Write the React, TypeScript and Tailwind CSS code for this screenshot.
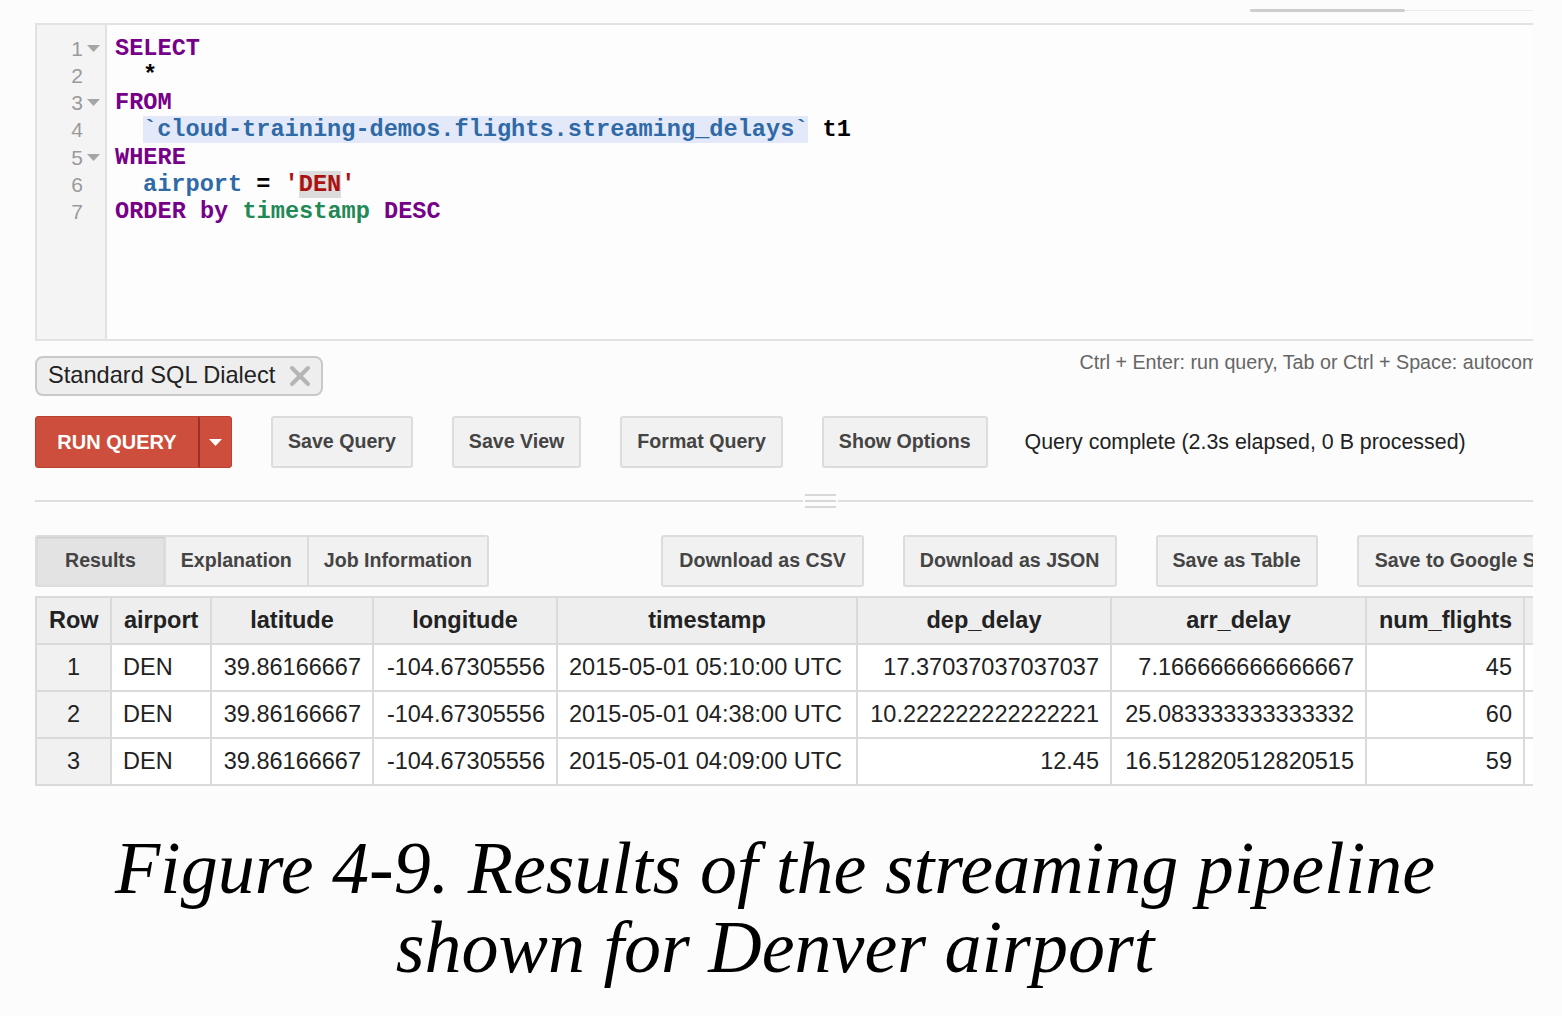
import React from "react";

const KW = "text-[#770088]";
const VAR = "text-[#2f6aa6]";

const codeLines: React.ReactNode[] = [
    <span className={KW}>SELECT</span>,
    <span className="pl-[28px] text-black">*</span>,
    <span className={KW}>FROM</span>,
    <span className="pl-[28px]">
        <span className={`${VAR} bg-[#e4e9fa]`}>`cloud-training-demos.flights.streaming_delays`</span>
        <span className="text-black"> t1</span>
    </span>,
    <span className={KW}>WHERE</span>,
    <span className="pl-[28px]">
        <span className={VAR}>airport</span>
        <span className="text-black"> = </span>
        <span className="text-[#aa1111]">
            '<span className="bg-[#dcdcdc]">DEN</span>'
        </span>
    </span>,
    <span>
        <span className={KW}>ORDER by </span>
        <span className="text-[#228855]">timestamp</span>
        <span className={KW}> DESC</span>
    </span>,
];

const folds = [true, false, true, false, true, false, false];

function Btn({ children, className = "px-[15px]" }: { children: React.ReactNode; className?: string }) {
    return (
        <button
            className={`h-[52px] shrink-0 whitespace-nowrap rounded-[3px] border-2 border-[#dcdcdc] bg-[#f1f1f1] text-[19.6px] font-bold text-[#444] ${className}`}
        >
            {children}
        </button>
    );
}

const columns = [
    { name: "Row", w: 75 },
    { name: "airport", w: 100 },
    { name: "latitude", w: 162 },
    { name: "longitude", w: 184 },
    { name: "timestamp", w: 300 },
    { name: "dep_delay", w: 254 },
    { name: "arr_delay", w: 255 },
    { name: "num_flights", w: 158 },
    { name: "", w: 100 },
];

const rows = [
    ["1", "DEN", "39.86166667", "-104.67305556", "2015-05-01 05:10:00 UTC", "17.37037037037037", "7.166666666666667", "45"],
    ["2", "DEN", "39.86166667", "-104.67305556", "2015-05-01 04:38:00 UTC", "10.222222222222221", "25.083333333333332", "60"],
    ["3", "DEN", "39.86166667", "-104.67305556", "2015-05-01 04:09:00 UTC", "12.45", "16.512820512820515", "59"],
];

export default function App() {
    return (
        <div className="min-h-screen bg-[#fcfcfc] font-['Liberation_Sans',Arial,sans-serif]">
            <div className="w-[1533px] overflow-hidden">
                <div className="ml-[35px] w-[1570px]">
                    {/* top scrollbar */}
                    <div className="flex h-[23px] items-start pt-[9px]">
                        <div className="ml-[1215px] h-[3px] w-[155px] rounded-full bg-[#cdcdcd]" />
                        <div className="mt-[1px] h-[1px] flex-1 bg-[#ececec]" />
                    </div>

                    {/* Editor */}
                    <div className="flex h-[318px] border-y-2 border-l-2 border-[#e2e2e2] bg-[#fdfdfd]">
                        <div className="w-[70px] border-r-2 border-[#e2e2e2] bg-[#f4f4f4] pt-[10px]">
                            {codeLines.map((_, i) => (
                                <div key={i} className="flex h-[27.2px] items-center justify-end pr-[2px] text-[21px] text-[#9a9a9a]">
                                    <span>{i + 1}</span>
                                    <span className="flex w-[20px] justify-center">
                                        {folds[i] && (
                                            <svg width="13" height="7" viewBox="0 0 13 7">
                                                <path d="M0 0h13L6.5 7z" fill="#a5a5a5" />
                                            </svg>
                                        )}
                                    </span>
                                </div>
                            ))}
                        </div>
                        <div className="flex-1 pl-[8px] pt-[10px] font-['Liberation_Mono',monospace] text-[23.6px] font-bold">
                            {codeLines.map((line, i) => (
                                <div key={i} className="flex h-[27.2px] items-center whitespace-pre">
                                    {line}
                                </div>
                            ))}
                        </div>
                    </div>

                    {/* dialect chip + hint */}
                    <div className="mt-[7px] flex items-start justify-between">
                        <div className="mt-[8px] flex h-[40px] items-center gap-[14px] rounded-[8px] border-2 border-[#c9c9c9] bg-[#eeeeee] pl-[11px] pr-[10px] text-[23.6px] text-[#222]">
                            <span>Standard SQL Dialect</span>
                            <svg width="22" height="22" viewBox="0 0 22 22">
                                <path d="M3 3l16 16M19 3L3 19" stroke="#b5b5b5" strokeWidth="4" strokeLinecap="round" />
                            </svg>
                        </div>
                        <div className="mr-[24px] whitespace-nowrap text-[19.7px] text-[#666]">
                            Ctrl + Enter: run query, Tab or Ctrl + Space: autocomplete
                        </div>
                    </div>

                    {/* action buttons */}
                    <div className="mt-[20px] flex items-center gap-[39px]">
                        <div className="flex h-[52px] shrink-0 overflow-hidden rounded-[3px] border border-[#b9412f] bg-[#cd4e3c] text-white">
                            <button className="w-[162px] text-[20px] font-bold">RUN QUERY</button>
                            <div className="w-[2px] bg-[#9c3225]" />
                            <button className="flex w-[31px] items-center justify-center">
                                <svg width="13" height="7" viewBox="0 0 13 7">
                                    <path d="M0 0h13L6.5 7z" fill="#fff" />
                                </svg>
                            </button>
                        </div>
                        <Btn>Save Query</Btn>
                        <Btn>Save View</Btn>
                        <Btn>Format Query</Btn>
                        <Btn>Show Options</Btn>
                        <span className="-ml-[2px] whitespace-nowrap text-[21.4px] text-[#222]">
                            Query complete (2.3s elapsed, 0 B processed)
                        </span>
                    </div>

                    {/* divider with handle */}
                    <div className="mt-[26px] flex h-[14px] items-center">
                        <div className="h-[2px] flex-1 bg-[#dedede]" />
                        <div className="mx-[2px] flex w-[31px] flex-col gap-[4px]">
                            <div className="h-[2px] bg-[#d8d8d8]" />
                            <div className="h-[2px] bg-[#d8d8d8]" />
                            <div className="h-[2px] bg-[#d8d8d8]" />
                        </div>
                        <div className="h-[2px] flex-1 bg-[#dedede]" />
                    </div>

                    {/* tabs + export buttons */}
                    <div className="mt-[27px] flex items-center justify-between">
                        <div className="flex h-[52px] overflow-hidden rounded-[3px] border-2 border-[#dcdcdc] bg-[#f1f1f1] text-[19.6px] font-bold text-[#444]">
                            <div className="flex items-center bg-[#e3e3e3] px-[28px] shadow-[inset_0_1px_2px_rgba(0,0,0,0.12)]">Results</div>
                            <div className="flex items-center border-l-2 border-[#dcdcdc] px-[15px]">Explanation</div>
                            <div className="flex items-center border-l-2 border-[#dcdcdc] px-[15px]">Job Information</div>
                        </div>
                        <div className="flex gap-[39px]">
                            <Btn className="px-[16px]">Download as CSV</Btn>
                            <Btn className="px-[15px]">Download as JSON</Btn>
                            <Btn className="px-[15px]">Save as Table</Btn>
                            <Btn className="px-[16px]">Save to Google Sheets</Btn>
                        </div>
                    </div>

                    {/* results table */}
                    <table className="mt-[9px] w-[1588px] table-fixed border-collapse text-[23.5px] text-[#222]">
                        <colgroup>
                            {columns.map((c, i) => (
                                <col key={i} style={{ width: c.w }} />
                            ))}
                        </colgroup>
                        <thead>
                            <tr className="h-[47px] bg-[#eeeeee]">
                                {columns.map((c, i) => (
                                    <th key={i} className="border-2 border-[#dadada] px-[12px] text-center font-bold">
                                        {c.name}
                                    </th>
                                ))}
                            </tr>
                        </thead>
                        <tbody>
                            {rows.map((r, ri) => (
                                <tr key={ri} className="h-[47px]">
                                    {r.map((v, ci) => (
                                        <td
                                            key={ci}
                                            className={`whitespace-nowrap border-2 border-[#dadada] px-[11px] ${
                                                ci === 0
                                                    ? "bg-[#f1f1f1] text-center"
                                                    : ci === 1 || ci === 4
                                                    ? "bg-white text-left"
                                                    : "bg-white text-right"
                                            }`}
                                        >
                                            {v}
                                        </td>
                                    ))}
                                    <td className="border-2 border-[#dadada] bg-white" />
                                </tr>
                            ))}
                        </tbody>
                    </table>
                </div>
            </div>

            {/* caption */}
            <div className="mt-[43px] w-[1550px] text-center font-['Liberation_Serif',serif] text-[74px] italic leading-[79px] text-black">
                <div>Figure 4-9. Results of the streaming pipeline</div>
                <div>shown for Denver airport</div>
            </div>
        </div>
    );
}
